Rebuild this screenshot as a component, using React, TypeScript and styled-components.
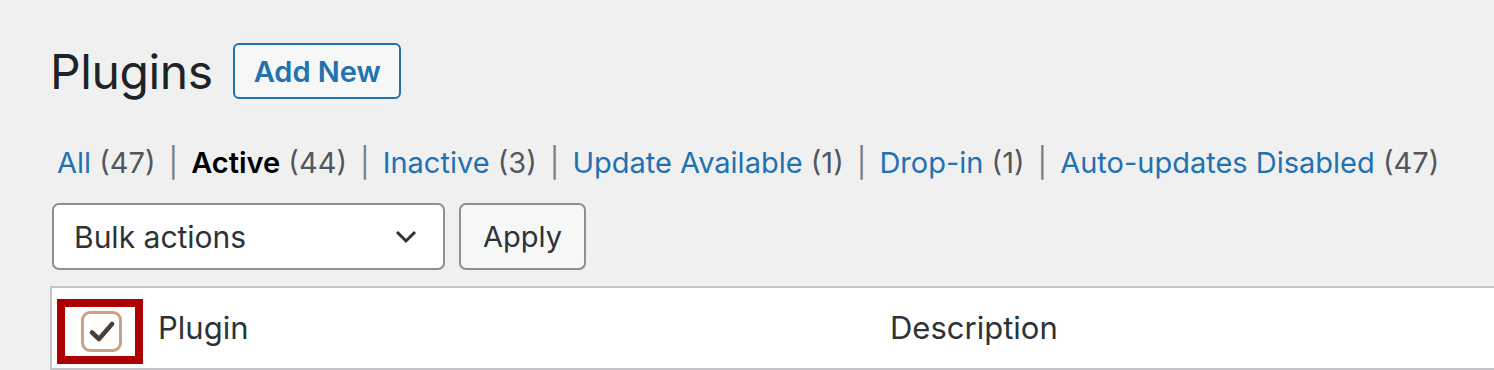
import React from "react";
import styled, { createGlobalStyle } from "styled-components";

const Global = createGlobalStyle`
  html, body { margin: 0; padding: 0; background: #f0f0f1; overflow: hidden; }
  body { font-family: Inter, "Noto Sans", sans-serif; color: #1d2327; }
`;

const Page = styled.div`
  padding: 40px 0 0 50px;
  width: 1494px;
  box-sizing: border-box;
`;

const TitleRow = styled.div`
  display: flex;
  align-items: center;
  gap: 20px;
  height: 62px;
`;

const Title = styled.h1`
  margin: 0;
  font-size: 48px;
  font-weight: 400;
  letter-spacing: -0.4px;
  color: #1d2327;
`;

const OutlineButton = styled.a`
  display: inline-flex;
  align-items: center;
  box-sizing: border-box;
  height: 56px;
  padding: 0 18px 0 19px;
  border: 2px solid #2271b1;
  border-radius: 6px;
  background: #f6f7f7;
  color: #2271b1;
  font-size: 29px;
  font-weight: 600;
  text-decoration: none;
`;

const Filters = styled.ul`
  display: flex;
  align-items: center;
  margin: 42px 0 0 7px;
  padding: 0;
  list-style: none;
  font-size: 29px;
  color: #50575e;
  height: 36px;
`;

const FilterItem = styled.li`
  display: flex;
  align-items: center;
  white-space: pre;
`;

const FilterLink = styled.a<{ $current?: boolean }>`
  color: ${(p) => (p.$current ? "#000" : "#2271b1")};
  font-weight: ${(p) => (p.$current ? 600 : 400)};
  text-decoration: none;
`;

const Sep = styled.span`
  color: #787c82;
  margin: 0 13px;
`;

const Actions = styled.div`
  display: flex;
  gap: 14px;
  margin: 23px 0 0 2px;
`;

const Select = styled.div`
  box-sizing: border-box;
  width: 393px;
  height: 67px;
  display: flex;
  align-items: center;
  justify-content: space-between;
  padding: 0 26px 0 20px;
  background: #fff;
  border: 2px solid #8c8f94;
  border-radius: 7px;
  font-size: 30px;
  color: #2c3338;
`;

const Button = styled.button`
  box-sizing: border-box;
  height: 67px;
  width: 127px;
  background: #f6f7f7;
  border: 2px solid #8c8f94;
  border-radius: 7px;
  font-family: inherit;
  font-size: 29px;
  color: #2c3338;
  padding: 0;
`;

const Table = styled.div`
  margin-top: 16px;
  margin-right: -20px;
  background: #fff;
  border: 2px solid #c3c4c7;
  border-right: none;
  height: 80px;
  display: flex;
  align-items: stretch;
`;

const CheckCell = styled.div`
  width: 106px;
  padding: 11px 0 0 5px;
  box-sizing: border-box;
`;

const Highlight = styled.div`
  box-sizing: border-box;
  width: 86px;
  height: 65px;
  border: 8px solid #ad0000;
  padding: 4px 0 0 16px;
`;

const CheckBox = styled.div`
  box-sizing: border-box;
  width: 41px;
  height: 41px;
  border: 3px solid #c8a283;
  border-radius: 9px;
  background: #fff;
  display: flex;
  align-items: center;
  justify-content: center;
`;

const HeadCell = styled.div<{ $width?: string }>`
  display: flex;
  align-items: center;
  width: ${(p) => p.$width || "auto"};
  font-size: 31px;
  color: #2c3338;
  padding-bottom: 2px;
`;

const filters = [
  { label: "All", count: 47 },
  { label: "Active", count: 44, current: true },
  { label: "Inactive", count: 3 },
  { label: "Update Available", count: 1 },
  { label: "Drop-in", count: 1 },
  { label: "Auto-updates Disabled", count: 47 },
];

export default function App() {
  return (
    <>
      <Global />
      <Page>
        <TitleRow>
          <Title>Plugins</Title>
          <OutlineButton href="#">Add New</OutlineButton>
        </TitleRow>
        <Filters>
          {filters.map((f, i) => (
            <FilterItem key={f.label}>
              <FilterLink href="#" $current={f.current}>
                {f.label}
              </FilterLink>
              {` (${f.count})`}
              {i < filters.length - 1 && <Sep>|</Sep>}
            </FilterItem>
          ))}
        </Filters>
        <Actions>
          <Select>
            Bulk actions
            <svg width="22" height="14" viewBox="0 0 22 14">
              <path d="M2 2 L11 11 L20 2" fill="none" stroke="#2c3338" strokeWidth="3" />
            </svg>
          </Select>
          <Button>Apply</Button>
        </Actions>
        <Table>
          <CheckCell>
            <Highlight>
              <CheckBox>
                <svg width="26" height="22" viewBox="0 0 26 22">
                  <path d="M3 11.5 L10 18 L23 3" fill="none" stroke="#4a403a" strokeWidth="4.5" strokeLinecap="round" strokeLinejoin="round" />
                </svg>
              </CheckBox>
            </Highlight>
          </CheckCell>
          <HeadCell $width="732px">Plugin</HeadCell>
          <HeadCell>Description</HeadCell>
        </Table>
      </Page>
    </>
  );
}
